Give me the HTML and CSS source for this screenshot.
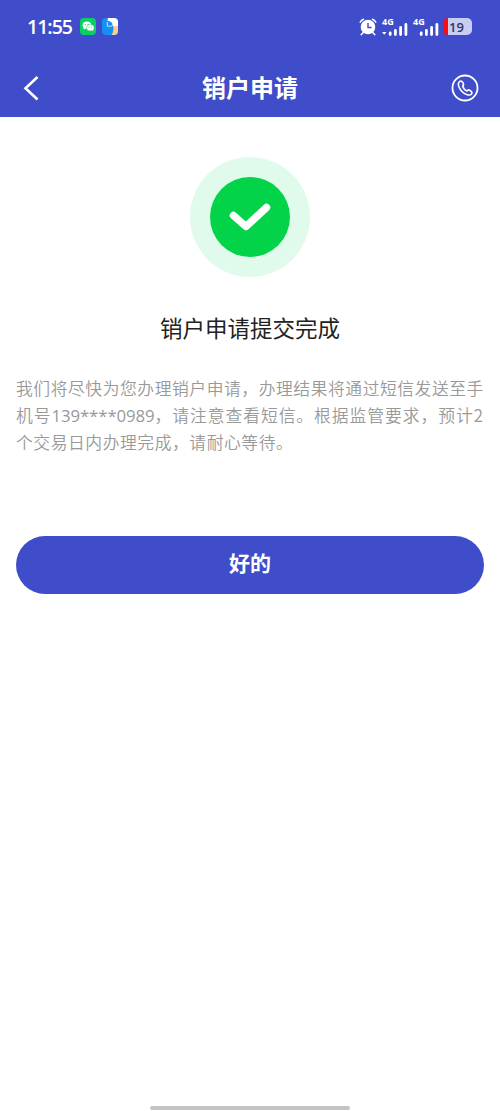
FILE: index.html
```html
<!DOCTYPE html>
<html lang="zh-CN">
<head>
    <meta charset="UTF-8">
    <meta name="viewport" content="width=device-width, initial-scale=1.0">
    <title>销户申请</title>
    <link rel="stylesheet" href="styles.css">
</head>
<body>
    <div class="page">
        <div class="top">
            <!-- 状态栏 -->
            <div class="status-bar">
                <span class="time">11:55</span>
                <svg class="app-icon" viewBox="0 0 16 17">
                    <rect width="16" height="17" rx="4" fill="#07cf62"/>
                    <ellipse cx="6.9" cy="7.2" rx="4.3" ry="3.6" fill="#fff"/>
                    <path d="M4 9l-.6 2.6 2.6-1.2z" fill="#fff"/>
                    <ellipse cx="10.3" cy="9.7" rx="3.9" ry="3.2" fill="#fff" stroke="#07cf62" stroke-width=".5"/>
                    <path d="M12 12l1.2 1.2-.3-2.2z" fill="#fff"/>
                    <g fill="#07cf62">
                        <circle cx="5.3" cy="6.3" r=".6"/>
                        <circle cx="8.1" cy="6.3" r=".6"/>
                        <circle cx="9" cy="9" r=".5"/>
                        <circle cx="11.4" cy="9" r=".5"/>
                    </g>
                </svg>
                <svg class="app-icon" viewBox="0 0 16 17">
                    <rect width="16" height="17" rx="4" fill="#168ff5"/>
                    <path d="M6 0h6a4 4 0 0 1 4 4v5h-4.500C10.500 4.500 8.500 3 5.500 3z" fill="#fff"/>
                    <path d="M11.300 8H16v5a4 4 0 0 1-4 4h-2.500c1.500-2 2.300-5 1.800-9z" fill="#ffcd91"/>
                    <path d="M5.300 4v4.200h3.500q2 0 2-2" fill="none" stroke="#d9f0ff" stroke-width=".9"/>
                </svg>
                <div class="status-right">
                    <svg class="alarm" viewBox="0 0 18 18">
                        <path d="M4.200 14.500l-2 2.300M13.800 14.500l2 2.300M1.200 4.200Q2.200 2 4.500 1.200M16.800 4.200Q15.800 2 13.500 1.200" fill="none" stroke="#fff" stroke-width="1.500" stroke-linecap="round"/>
                        <circle cx="9" cy="9" r="7.300" fill="#fff"/>
                        <path d="M9 5v4.500h3.500" fill="none" stroke="#3f4dca" stroke-width="1.400"/>
                    </svg>
                    <div class="signal">
                        <span class="net">4G</span>
                        <svg viewBox="0 0 26 13">
                            <path d="M0 9h4.400l-2.200 2.800z" fill="#fff"/>
                            <path d="M8.200 11.500V10M13.400 11.500V7.500M18.600 11.500V4.500M23.900 11.500V1.500" stroke="#fff" stroke-width="2.800" stroke-linecap="round"/>
                        </svg>
                    </div>
                    <div class="signal">
                        <span class="net">4G</span>
                        <svg viewBox="0 0 26 13">
                            <path d="M8.200 11.500V10M13.400 11.500V7.500M18.600 11.500V4.500M23.900 11.500V1.500" stroke="#fff" stroke-width="2.800" stroke-linecap="round"/>
                        </svg>
                    </div>
                    <div class="battery"><span>19</span></div>
                </div>
            </div>

            <!-- 导航栏 -->
            <div class="nav-bar">
                <svg class="back" viewBox="0 0 16 26">
                    <path d="M14.500 2L2.500 13.200 14.500 24.500" fill="none" stroke="#fff" stroke-width="2.600"/>
                </svg>
                <h1>销户申请</h1>
                <svg class="phone" viewBox="0 0 28 28">
                    <circle cx="14" cy="14" r="12.500" fill="none" stroke="#fff" stroke-width="1.800"/>
                    <path d="M8.500 7.700C6.300 9.300 7.300 13.500 10.700 17.200S18.800 22.200 20.600 19.900C21.700 18.200 20.600 17.600 19 16.500C17.500 15.500 16.800 15.800 16.200 17C14.500 16.500 12.200 14 11.600 12C12.900 11.300 12.900 10.600 12.100 9C11 7 10 6.500 8.500 7.700Z" fill="none" stroke="#fff" stroke-width="1.600" stroke-linejoin="round"/>
                </svg>
            </div>
        </div>

        <!-- 提交结果 -->
        <div class="content">
            <div class="result-icon">
                <div class="result-inner">
                    <svg viewBox="0 0 80 80">
                        <path d="M23.500 38.500L36 49.500 56.500 30.500" fill="none" stroke="#fff" stroke-width="7.500" stroke-linecap="round" stroke-linejoin="round"/>
                    </svg>
                </div>
            </div>
            <h2>销户申请提交完成</h2>
            <p class="desc">
                我们将尽快为您办理销户申请，办理结果将通过短信发送至手<br>
                <span class="wide">机号<span class="num">139****0989</span>，请注意查看短信。根据监管要求，预计2</span><br>
                个交易日内办理完成，请耐心等待。
            </p>
            <button class="btn">好的</button>
        </div>

        <div class="home-bar"></div>
    </div>
</body>
</html>
```
FILE: styles.css
```css
* {
    box-sizing: border-box;
    margin: 0;
    padding: 0;
}
body {
    font-family: "Noto Sans CJK SC", sans-serif;
    background-color: #fff;
}
.page {
    display: flex;
    flex-direction: column;
    height: 1111px;
    overflow: hidden;
}
.top {
    height: 117px;
    background-color: #3f4dca;
    color: #fff;
}
.status-bar {
    display: flex;
    align-items: center;
    height: 58px;
    padding: 0 28px 5px 27px;
}
.time {
    width: 46px;
    margin-right: 7px;
    font-family: "Open Sans", sans-serif;
    font-size: 19.5px;
    font-weight: 650;
    letter-spacing: -1px;
    white-space: nowrap;
}
.app-icon {
    width: 16px;
    height: 17px;
    margin-right: 6px;
}
.status-right {
    display: flex;
    align-items: center;
    margin-left: auto;
}
.alarm {
    width: 18px;
    height: 18px;
    margin-right: 5px;
}
.signal {
    width: 26px;
    height: 18px;
    margin-right: 5px;
}
.signal + .battery {
    margin-left: -1px;
}
.net {
    display: block;
    height: 5px;
    font-family: "Open Sans", sans-serif;
    font-size: 9px;
    font-weight: 700;
    line-height: 8px;
}
.signal svg {
    display: block;
    width: 26px;
    height: 13px;
}
.battery {
    width: 29px;
    height: 17px;
    padding-right: 2px;
    border-radius: 5px;
    background: linear-gradient(to right, #fb0b12 5px, #cacdf3 5px);
    color: #33365c;
    font-family: "Open Sans", sans-serif;
    font-size: 13px;
    font-weight: 600;
    line-height: 18px;
    text-align: center;
}
.nav-bar {
    display: flex;
    align-items: center;
    justify-content: space-between;
    height: 59px;
    padding: 0 21px 0 23px;
}
.back {
    width: 16px;
    height: 26px;
    margin-right: 10px;
}
.nav-bar h1 {
    height: 38px;
    font-size: 24px;
    font-weight: 700;
    line-height: 35px;
}
.phone {
    width: 28px;
    height: 28px;
}
.content {
    display: flex;
    flex: 1;
    flex-direction: column;
    align-items: center;
    padding: 40px 16px 0;
}
.result-icon {
    display: flex;
    align-items: center;
    justify-content: center;
    width: 120px;
    height: 120px;
    border-radius: 50%;
    background-color: #e0fbeb;
}
.result-inner {
    width: 80px;
    height: 80px;
    border-radius: 50%;
    background-color: #03d348;
}
.result-inner svg {
    display: block;
}
h2 {
    margin-top: 33px;
    color: #222;
    font-size: 22.5px;
    font-weight: 400;
    line-height: 34px;
}
.desc {
    width: 468px;
    margin-top: 31px;
    color: #999;
    font-size: 16.8px;
    font-weight: 350;
    line-height: 26.6px;
    letter-spacing: 0.55px;
    white-space: nowrap;
}
.wide {
    letter-spacing: 0.95px;
}
.num {
    font-family: "Open Sans", sans-serif;
    font-weight: 400;
    letter-spacing: -0.1px;
}
.btn {
    width: 100%;
    height: 58px;
    margin-top: 80px;
    padding-bottom: 5px;
    border: none;
    border-radius: 29px;
    background-color: #3f4dca;
    color: #fff;
    font-family: inherit;
    font-size: 21px;
    font-weight: 700;
    cursor: pointer;
}
.home-bar {
    width: 200px;
    height: 4px;
    margin: 0 auto 1px;
    border-radius: 2px;
    background-color: #c4c4c4;
}
```
